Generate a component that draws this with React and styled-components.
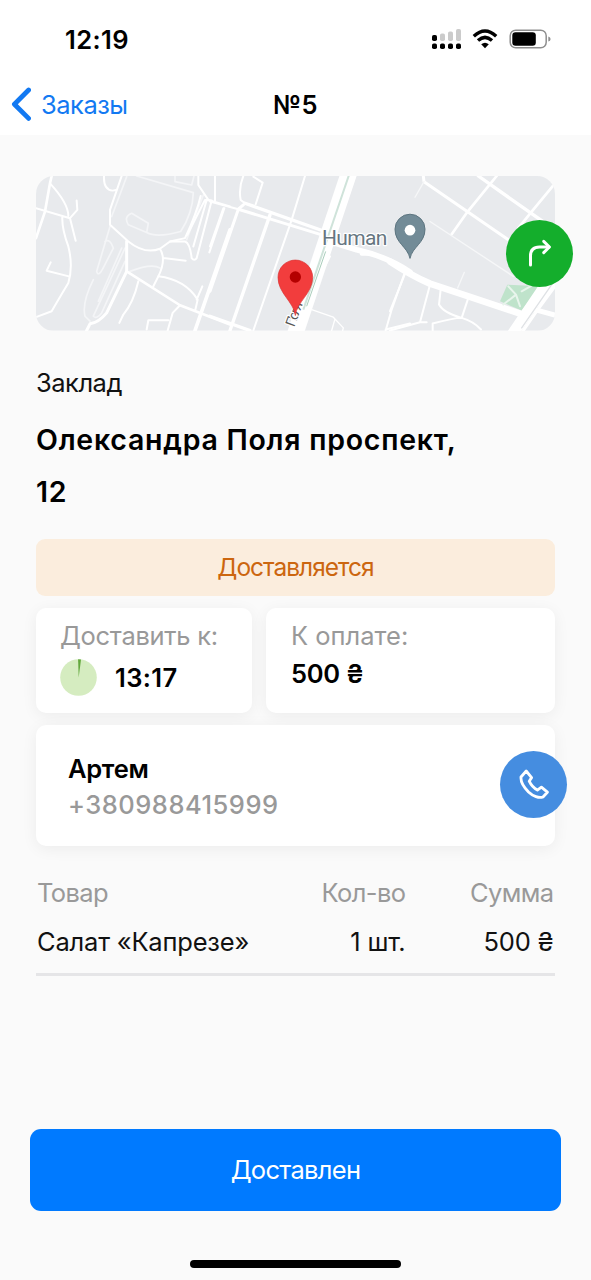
import React from 'react';
import styled, { createGlobalStyle } from 'styled-components';

const order = {
  number: '№5',
  place: 'Заклад',
  address: 'Олександра Поля проспект, 12',
  status: 'Доставляется',
  deliverAt: '13:17',
  total: '500 ₴',
  client: 'Артем',
  phone: '+380988415999',
  items: [{ id: 1, name: 'Салат «Капрезе»', count: '1 шт.', sum: '500 ₴' }],
};

export default function App() {
  return (
    <Screen>
      <GlobalStyle />
      <Header>
        <StatusBar>
          <Clock>12:19</Clock>
          <StatusIcons />
        </StatusBar>
        <NavBar>
          <BtnBack type="button">
            <svg width="21" height="34" viewBox="0 0 21 34" fill="none">
              <path d="M18.6 3L4.4 17.2L18.6 31.4" stroke="#1279f2" strokeWidth="4.8" strokeLinecap="round" strokeLinejoin="round" />
            </svg>
            <BackText>Заказы</BackText>
          </BtnBack>
          <NavTitle>{order.number}</NavTitle>
          <span />
        </NavBar>
      </Header>
      <Main>
        <MapBox>
          <MapDrawing />
          <BtnRound type="button" $color="#14ae2c" $right="-18px" $top="43.5px" aria-label="Маршрут">
            <svg width="24" height="28" viewBox="0 0 24 28" fill="none" stroke="#fff" strokeWidth="3" strokeLinecap="round" strokeLinejoin="round">
              <path d="M2.5 26V17Q2.5 8 11.5 8H21" />
              <path d="M15.7 2.4L21.4 8L15.7 13.6" />
            </svg>
          </BtnRound>
        </MapBox>
        <Place>{order.place}</Place>
        <Address>{order.address}</Address>
        <StatusLine>{order.status}</StatusLine>
        <InfoRow>
          <TimeCard>
            <CardLabel $spacing="-0.3px">Доставить к:</CardLabel>
            <TimeRow>
              <svg width="37" height="37" viewBox="0 0 37 37">
                <circle cx="18.5" cy="18.5" r="18.3" fill="#d5ecc0" />
                <path d="M18.7 18.5L18.1 .2Q19.6 .2 21 .5Z" fill="#62a83c" />
              </svg>
              <CardValue $spacing="0.4px">{order.deliverAt}</CardValue>
            </TimeRow>
          </TimeCard>
          <PayCard>
            <CardLabel $spacing="0">К оплате:</CardLabel>
            <CardValue $spacing="-0.3px">{order.total}</CardValue>
          </PayCard>
        </InfoRow>
        <ContactCard>
          <ClientName>{order.client}</ClientName>
          <Phone>{order.phone}</Phone>
          <BtnRound type="button" $color="#458de0" $right="-12px" $top="26px" aria-label="Позвонить">
            <svg width="30" height="30" viewBox="0 0 30 30" fill="none" stroke="#fff" strokeWidth="2.8" strokeLinejoin="round">
              <path d="M2 8L7.2 2L12.6 8.6L10.2 12.2C12 16 15 19.3 18.4 21.1L22.4 18.2L28.4 23.2L24 28C20 29.4 14 27.3 9.5 23C4.5 18 1.5 13 2 8Z" />
            </svg>
          </BtnRound>
        </ContactCard>
        <Goods>
          <GoodsRow $head>
            <span>Товар</span>
            <Cell>Кол-во</Cell>
            <Cell>Сумма</Cell>
          </GoodsRow>
          {order.items.map((item) => (
            <GoodsRow key={item.id}>
              <span>{item.name}</span>
              <Cell>{item.count}</Cell>
              <Cell>{item.sum}</Cell>
            </GoodsRow>
          ))}
        </Goods>
      </Main>
      <Footer>
        <BtnDone type="button">Доставлен</BtnDone>
        <HomeBar />
      </Footer>
    </Screen>
  );
}

function StatusIcons() {
  return (
    <svg width="121" height="26" viewBox="0 0 121 26">
      <g fill="#000">
        <rect x="1" y="9" width="5" height="6" rx="1.8" />
        <rect x="1" y="17.5" width="5" height="5.5" rx="1.8" />
        <rect x="9" y="17.5" width="5" height="5.5" rx="1.8" />
        <rect x="17" y="17.5" width="5" height="5.5" rx="1.8" />
        <rect x="25" y="17.5" width="5" height="5.5" rx="1.8" />
      </g>
      <g fill="#cbcbcb">
        <rect x="9" y="7.5" width="5" height="7.5" rx="1.8" />
        <rect x="17" y="5.5" width="5" height="9.5" rx="1.8" />
        <rect x="25" y="3" width="5" height="12" rx="1.8" />
      </g>
      <g fill="none" stroke="#000" strokeWidth="3.4">
        <path d="M42.8 10.2Q54 -.3 65.2 10.2" />
        <path d="M47 14.6Q54 8.2 61 14.6" />
      </g>
      <path d="M50.2 18.3Q54 15 57.8 18.3L54 22.3Z" />
      <rect x="79.2" y="4.2" width="36" height="17.6" rx="5.5" fill="none" stroke="#8e8e8e" strokeWidth="1.5" />
      <rect x="81.3" y="6.3" width="23.5" height="13.5" rx="3.2" />
      <path d="M117.3 10.4Q119.6 11 119.6 13Q119.6 15 117.3 15.6Z" fill="#8e8e8e" />
    </svg>
  );
}

function MapDrawing() {
  return (
    <MapSvg viewBox="18 18 1557 465" preserveAspectRatio="none">
      <rect x="18" y="18" width="1557" height="465" fill="#e8eaed" />
      <g fill="none" stroke="#f4f5f7" strokeWidth="5" strokeLinecap="round" strokeLinejoin="round">
        <path d="M320 18L490 68Q488 130 452 185Q380 205 350 188L295 165Q280 140 305 130L355 160L350 188" />
        <path d="M290 20L245 140M435 18V35L485 45L492 18M240 170L200 305Q205 325 222 290L250 235Q240 205 225 215" />
        <path d="M285 235L190 440Q200 450 215 430L285 275M190 330Q155 400 165 440L180 455M275 235L205 395" />
        <path d="M470 210L520 75M300 305Q365 280 390 295" />
      </g>
      <g fill="none" stroke="#fff" strokeWidth="6" strokeLinecap="round" strokeLinejoin="round">
        <path d="M65 18L60 40L45 125L18 205" strokeWidth="8" />
        <path d="M18 115L120 145L142 120L140 92M60 40Q115 100 115 138M120 145L137 213M97 140Q95 175 115 230Q130 290 115 340Q85 390 65 425L20 442" />
        <path d="M117 320L50 303L62 278M222 18Q220 60 248 62L258 60" />
        <path d="M275 18L240 120V165L295 215Q345 255 390 237L420 215L465 205Q500 130 512 78M390 237Q410 270 385 320L370 350M400 265L467 273" />
        <path d="M290 215V305L230 430Q205 460 180 463L170 483" strokeWidth="9" />
        <path d="M290 305L450 407L600 465" strokeWidth="8" />
        <path d="M325 335Q310 400 280 435L268 460M385 320Q465 330 503 390L495 425M517 350L500 390" />
        <path d="M350 480L355 452H415M450 407L428 430L413 483" />
        <path d="M420 215H465Q480 220 485 265Q493 275 500 265L545 92L525 90L472 195M530 90L490 230" />
        <path d="M505 18V45L535 90L600 110M555 18V90M583 115L538 248" />
        <path d="M600 180L495 483" strokeWidth="11" />
      </g>
      <g transform="translate(540 0)">
        <g fill="none" stroke="#fff" strokeWidth="6" strokeLinecap="round" strokeLinejoin="round">
          <path d="M15 18V92M0 95L85 118M100 18Q85 55 92 90L105 100M130 20L158 38L137 103" />
          <path d="M105 100L345 185" strokeWidth="10" />
          <path d="M85 118L345 198" strokeWidth="9" />
          <path d="M85 118L0 365M100 105L85 118" strokeWidth="9" />
          <path d="M40 115L0 230M285 18L245 150L130 483" />
          <path d="M180 135L60 483" strokeWidth="10" />
          <path d="M0 440L120 483" strokeWidth="10" />
          <path d="M305 420L370 443L400 475L398 483M375 448L365 483" strokeWidth="4" />
          <path d="M345 290L360 260M585 307L545 420L527 483M527 480L600 462" />
          <path d="M375 220L440 240Q530 260 600 307" strokeWidth="17" />
          <path d="M455 252H485" strokeWidth="12" />
        </g>
        <path d="M420 0L250 510" stroke="#fff" strokeWidth="49" />
        <path d="M422 0L280 420" stroke="#cfe3da" strokeWidth="6" />
        <path d="M347 245L290 410" stroke="#a9cdbb" strokeWidth="3" />
      </g>
      <g transform="translate(1080 0)">
        <path d="M352 345L450 350L395 423L330 395Z" fill="#bfe3cb" />
        <g fill="none" stroke="#fff" strokeWidth="6" strokeLinecap="round" strokeLinejoin="round">
          <path d="M0 275Q60 315 120 342L240 382L390 432" strokeWidth="20" />
          <path d="M100 18L102 35L355 210" strokeWidth="9" />
          <path d="M265 18L440 142L495 180" strokeWidth="10" />
          <path d="M320 18L233 125L185 193M495 40L425 125L385 175" strokeWidth="8" />
          <path d="M48 305L0 425M120 345L90 458L0 483M90 458H110M152 360L147 405Q160 430 215 445L235 385M128 483V462Q190 445 215 445Q250 455 273 480" />
          <path d="M102 35L75 82M120 155L370 320M223 308L203 355" stroke="#f6f7f8" strokeWidth="4" />
          <path d="M340 405L378 375L390 410M378 375L355 350M395 365L430 345" stroke="#e8f5ec" />
          <path d="M505 290L370 490" strokeWidth="34" />
          <path d="M435 420L500 438M440 405L500 335" strokeWidth="15" />
          <path d="M395 475L485 345" stroke="#dfe2e5" strokeWidth="4" />
          <path d="M400 483L440 425L495 350" strokeWidth="9" />
        </g>
      </g>
      <g fontFamily="Roboto, sans-serif" fill="#667681" stroke="#fff" strokeWidth="7" paintOrder="stroke" strokeLinejoin="round">
        <text x="876" y="225" fontSize="63" textLength="196">Human</text>
        <text transform="translate(793 474) rotate(-70)" fontSize="42" textLength="76" fill="#555">Поля</text>
      </g>
      <path d="M1140 266C1133 231 1095 220 1095 178A45 45 0 0 1 1185 178C1185 220 1147 231 1140 266Z" fill="#728b97" stroke="#5c7480" strokeWidth="3" />
      <circle cx="1140" cy="181" r="16" fill="#fff" />
      <path d="M796 438C791 396 744 371 744 323A52 52 0 0 1 848 323C848 371 801 396 796 438Z" fill="#f23d3d" stroke="#d93232" strokeWidth="2" />
      <circle cx="796" cy="322" r="17" fill="#b40000" />
    </MapSvg>
  );
}

const GlobalStyle = createGlobalStyle`
  * {
    box-sizing: border-box;
  }
  body {
    margin: 0;
    background-color: #fafafa;
    font-family: Inter, 'Liberation Sans', sans-serif;
  }
  button {
    border: none;
    padding: 0;
    background: none;
    font-family: inherit;
    cursor: pointer;
  }
`
const Screen = styled.div`
  display: flex;
  flex-direction: column;
  width: 100%;
  height: 1280px;
  font-size: 25.5px;
  color: #000;
`
const Header = styled.header`
  height: 135px;
  background-color: #fff;
`
const StatusBar = styled.div`
  display: flex;
  justify-content: space-between;
  align-items: center;
  height: 75px;
  padding: 3px 39px 0 65px;
`
const Clock = styled.span`
  font-size: 25.5px;
  font-weight: 600;
  letter-spacing: 0.4px;
`
const NavBar = styled.nav`
  display: grid;
  grid-template-columns: 1fr auto 1fr;
  align-items: center;
  height: 60px;
  padding: 0 10px 2px;
`
const BtnBack = styled.button`
  display: flex;
  align-items: center;
  gap: 10px;
  color: #1279f2;
`
const BackText = styled.span`
  font-size: 25.5px;
  letter-spacing: -0.5px;
`
const NavTitle = styled.h1`
  margin: 0;
  font-size: 25.5px;
  font-weight: 600;
  letter-spacing: 0.4px;
`
const Main = styled.main`
  flex: 1;
  padding: 41px 36px 0;
`
const MapBox = styled.section`
  position: relative;
  height: 154.5px;
`
const MapSvg = styled.svg`
  display: block;
  width: 100%;
  height: 100%;
  border-radius: 18px;
`
const BtnRound = styled.button`
  position: absolute;
  top: ${(props) => props.$top};
  right: ${(props) => props.$right};
  display: flex;
  justify-content: center;
  align-items: center;
  width: 67px;
  height: 67px;
  border-radius: 50%;
  background-color: ${(props) => props.$color};
`
const Place = styled.p`
  margin: 36px 0 0;
  line-height: 32px;
  font-size: 25.5px;
  letter-spacing: -0.5px;
  color: #111;
`
const Address = styled.h2`
  width: 440px;
  margin: 15px 0 0;
  font-size: 28.5px;
  font-weight: 600;
  line-height: 52.5px;
  letter-spacing: 0.75px;
`
const StatusLine = styled.div`
  height: 57px;
  margin-top: 20px;
  border-radius: 9px;
  background-color: #fbeddd;
  line-height: 57px;
  text-align: center;
  font-size: 24.5px;
  letter-spacing: -1px;
  color: #cc660f;
`
const InfoRow = styled.div`
  display: flex;
  gap: 14px;
  margin-top: 12px;
`
const Card = styled.section`
  border-radius: 10px;
  background-color: #fff;
  box-shadow: 0 3px 16px rgba(0, 0, 0, 0.06);
`
const TimeCard = styled(Card)`
  width: 216px;
  height: 105px;
  padding: 12px 24px;
`
const PayCard = styled(Card)`
  flex: 1;
  height: 105px;
  padding: 12px 25px;
`
const CardLabel = styled.div`
  line-height: 32px;
  letter-spacing: ${(props) => props.$spacing};
  white-space: nowrap;
  color: #999;
`
const TimeRow = styled.div`
  display: flex;
  align-items: center;
  gap: 18px;
  margin-top: 4px;
`
const CardValue = styled.div`
  line-height: 43px;
  font-size: 25.5px;
  font-weight: 600;
  letter-spacing: ${(props) => props.$spacing};
`
const ContactCard = styled(Card)`
  position: relative;
  height: 121px;
  margin-top: 12px;
  padding: 26px 32px;
`
const ClientName = styled.div`
  line-height: 36px;
  font-size: 25.5px;
  font-weight: 600;
  letter-spacing: -0.3px;
`
const Phone = styled.div`
  line-height: 36px;
  font-weight: 500;
  letter-spacing: 0.5px;
  color: #999;
`
const Goods = styled.section`
  margin-top: 22px;
  border-bottom: 3px solid #e5e5e7;
`
const GoodsRow = styled.div`
  display: grid;
  grid-template-columns: 1fr 120px 148px;
  height: ${(props) => (props.$head ? '49px' : '56px')};
  padding: 0 1.5px 0 1px;
  line-height: 49px;
  letter-spacing: ${(props) => (props.$head ? '-0.6px' : '-0.2px')};
  color: ${(props) => (props.$head ? '#999' : '#111')};
`
const Cell = styled.span`
  text-align: right;
`
const Footer = styled.footer`
  display: flex;
  flex-direction: column;
  align-items: center;
  height: 151.5px;
  padding: 0 30px;
`
const BtnDone = styled.button`
  width: 100%;
  height: 82px;
  border-radius: 11px;
  background-color: #007aff;
  font-size: 25.5px;
  letter-spacing: -0.7px;
  color: #fff;
`
const HomeBar = styled.div`
  width: 211px;
  height: 8px;
  margin-top: 49.5px;
  border-radius: 4px;
  background-color: #000;
`
